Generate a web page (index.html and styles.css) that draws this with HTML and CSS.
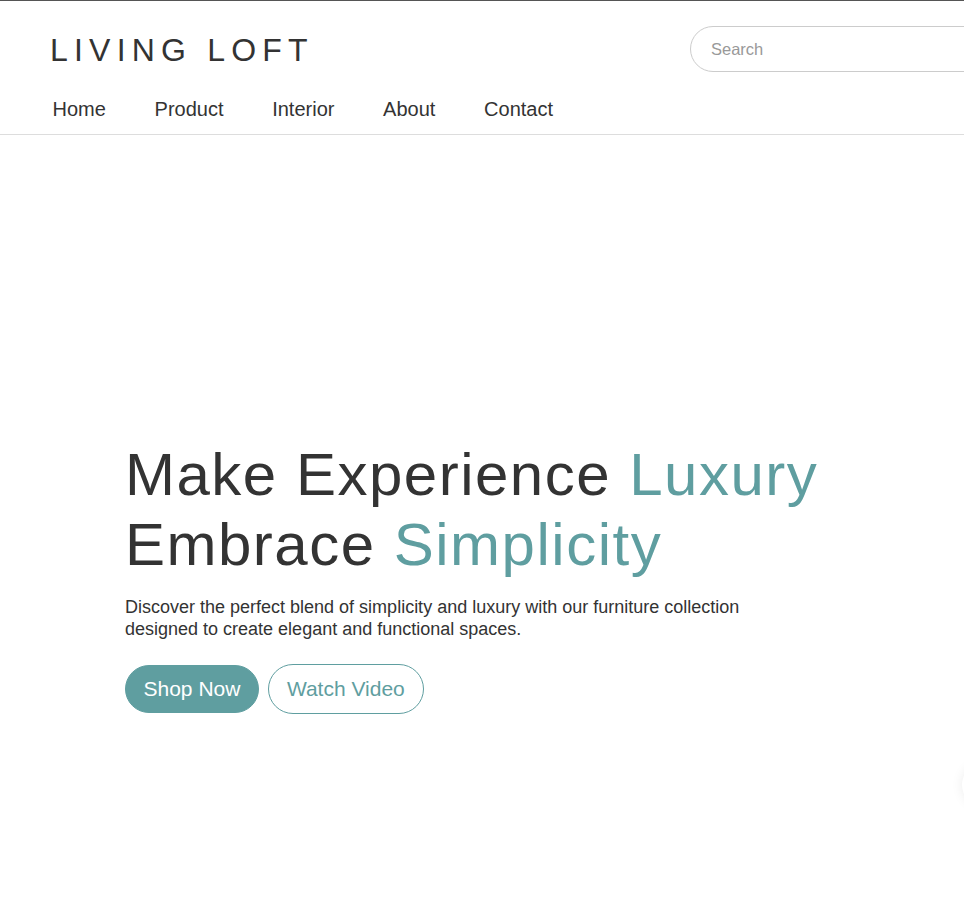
FILE: index.html
```html
<!DOCTYPE html>
<html lang="en">
<head>
<meta charset="utf-8">
<title>Living Loft</title>
<link rel="stylesheet" href="styles.css">
</head>
<body>
<header class="site-header">
  <div class="top-row">
    <div class="logo">LIVING LOFT</div>
    <input class="search" type="text" placeholder="Search">
  </div>
  <nav class="main-nav">
    <a href="#">Home</a>
    <a href="#">Product</a>
    <a href="#">Interior</a>
    <a href="#">About</a>
    <a href="#">Contact</a>
  </nav>
</header>
<section class="hero">
  <h1 class="hero-title">Make Experience <span class="accent">Luxury</span><br>Embrace <span class="accent">Simplicity</span></h1>
  <p class="hero-text">Discover the perfect blend of simplicity and luxury with our furniture collection designed to create elegant and functional spaces.</p>
  <div class="hero-actions">
    <a href="#" class="btn btn-primary">Shop Now</a>
    <a href="#" class="btn btn-outline">Watch Video</a>
  </div>
  <div class="edge-card"></div>
</section>
</body>
</html>
```
FILE: styles.css
```css
* { box-sizing: border-box; }
html, body { margin: 0; padding: 0; background: #fff; }
body {
  font-family: "Liberation Sans", Arial, sans-serif;
  color: #333;
  overflow: hidden;
}
.site-header {
  border-top: 1px solid #555;
  border-bottom: 1px solid #ddd;
  padding: 25px 0 13px 50px;
  overflow: hidden;
}
.top-row {
  display: flex;
  align-items: center;
  justify-content: space-between;
}
.logo {
  font-size: 32px;
  letter-spacing: 6.2px;
  color: #333;
  line-height: 36px;
  margin-top: 2px;
}
.search {
  width: 320px;
  height: 46px;
  margin-right: -46px;
  border: 1px solid #ccc;
  border-radius: 23px;
  padding: 0 20px;
  font-family: "Liberation Sans", Arial, sans-serif;
  font-size: 16.5px;
  color: #333;
  outline: none;
}
.search::placeholder { color: #999; }
.main-nav {
  display: flex;
  gap: 48.7px;
  margin: 26px 0 0 2.5px;
}
.main-nav a {
  font-size: 20px;
  line-height: 23px;
  color: #333;
  text-decoration: none;
}
.hero {
  position: relative;
  padding: 305px 0 200px 125px;
}
.hero-title {
  margin: 0;
  font-size: 60px;
  line-height: 70px;
  font-weight: 400;
  letter-spacing: 1.5px;
  color: #333;
}
.accent { color: #5f9ea0; }
.hero-text {
  margin: 17px 0 0;
  max-width: 650px;
  font-size: 18px;
  line-height: 21.6px;
  color: #333;
}
.hero-actions {
  display: flex;
  gap: 9px;
  margin-top: 24px;
  align-items: center;
}
.btn {
  display: inline-block;
  font-size: 21px;
  line-height: 24px;
  padding: 11px 17.5px;
  border: 1px solid #5f9ea0;
  border-radius: 26px;
  text-decoration: none;
}
.btn-primary { background: #5f9ea0; color: #fff; }
.btn-outline { background: #fff; color: #5f9ea0; padding: 12px 18px; }
.edge-card {
  position: absolute;
  left: 962px;
  top: 628px;
  width: 200px;
  height: 44px;
  border-radius: 22px;
  background: #fff;
  box-shadow: 0 0 12px rgba(0,0,0,0.08);
}
```
